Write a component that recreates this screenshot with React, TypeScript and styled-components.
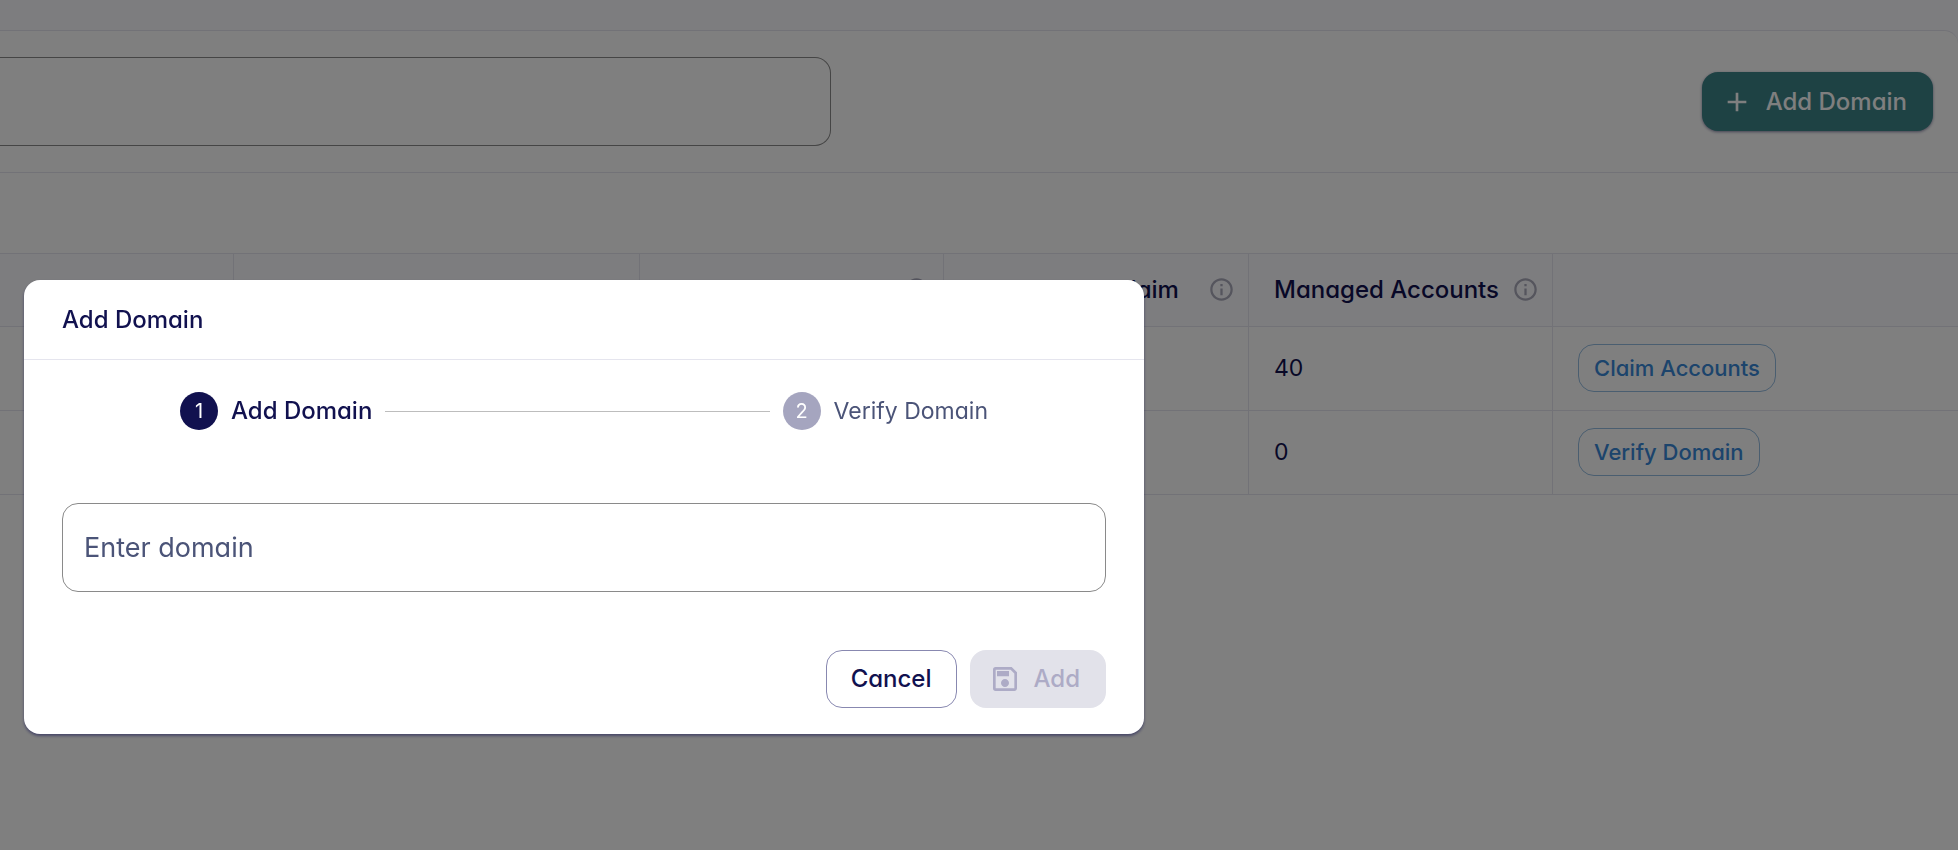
import React, { useState } from 'react';
import styled, { createGlobalStyle, css } from 'styled-components';
import { MdAdd, MdInfoOutline, MdOutlineSave } from 'react-icons/md';

const navy = '#11114f';
const line = '#e5e5ee';

const GlobalStyle = createGlobalStyle`
  *, *::before, *::after { box-sizing: border-box; }
  body {
    margin: 0;
    background: #fafaff;
    color: ${navy};
    font-family: Inter, "Open Sans", sans-serif;
    font-size: 23px;
    line-height: 32px;
    font-feature-settings: "cv11";
  }
  button, input { font: inherit; font-feature-settings: inherit; }
`;

const Page = styled.div`
  min-height: 100vh;
  display: flex;
  flex-direction: column;
  padding-top: 30px;
`;

const Panel = styled.main`
  flex: 1;
  background: #fff;
  border-top: 1px solid ${line};
  border-radius: 0 14px 0 0;
`;

const Toolbar = styled.div`
  display: flex;
  align-items: center;
  justify-content: space-between;
  gap: 26px;
  padding: 26px 25px 26px 0;
  border-bottom: 1px solid ${line};
`;

const SearchInput = styled.input`
  flex: 0 1 831px;
  min-width: 0;
  height: 89px;
  padding: 0 22px;
  background: transparent;
  border: 1px solid #8a8a8a;
  border-left: 0;
  border-radius: 0 16px 16px 0;
  color: ${navy};
  outline: none;
`;

const Button = styled.button<{ $kind: 'primary' | 'outline' | 'muted' }>`
  display: inline-flex;
  align-items: center;
  justify-content: center;
  gap: 13px;
  padding: 0 26px 0 19px;
  border: 0;
  border-radius: 16px;
  font-size: 24px;
  font-weight: 500;
  white-space: nowrap;
  ${({ $kind }) =>
    $kind === 'primary' &&
    css`
      height: 59px;
      background: #3c8488;
      color: #fff;
      box-shadow: 0 1px 3px rgba(17, 17, 79, 0.5);
    `}
  ${({ $kind }) =>
    $kind === 'outline' &&
    css`
      height: 58px;
      padding: 0 24px;
      background: #fff;
      color: ${navy};
      border: 1px solid #8888b0;
    `}
  ${({ $kind }) =>
    $kind === 'muted' &&
    css`
      height: 58px;
      background: #e2e2ea;
      color: #adabc6;
    `}
`;

const TableIntro = styled.div`
  height: 80px;
`;

const Table = styled.table`
  width: 100%;
  table-layout: fixed;
  border-collapse: separate;
  border-spacing: 0;
  border-top: 1px solid ${line};
`;

const Col = styled.col<{ $width?: number }>`
  width: ${({ $width }) => ($width ? `${$width}px` : 'auto')};
`;

const cell = css`
  border-right: 1px solid ${line};
  border-bottom: 1px solid ${line};
  text-align: left;
  vertical-align: middle;
  &:last-child { border-right: 0; }
`;

const HeadCell = styled.th`
  ${cell}
  height: 73px;
  padding: 0 13px 1px 25px;
  background: #fafaff;
  font-size: 24px;
  font-weight: 500;
`;

const HeadContent = styled.div`
  display: flex;
  align-items: center;
  justify-content: space-between;
  white-space: nowrap;
`;

const InfoIcon = styled(MdInfoOutline)`
  flex: none;
  width: 27px;
  height: 27px;
  margin-left: auto;
  color: #aaaabb;
`;

const Cell = styled.td`
  ${cell}
  height: 84px;
  padding: 0 26px 2px 25px;
`;

const RowButton = styled.button`
  display: block;
  height: 48px;
  padding: 0 15px;
  background: transparent;
  border: 1px solid #94bce0;
  border-radius: 16px;
  color: #3888d8;
  font-size: 22px;
  font-weight: 500;
  white-space: nowrap;
`;

const Overlay = styled.div`
  position: fixed;
  inset: 0;
  padding: 280px 24px 24px;
  background: rgba(0, 0, 0, 0.5);
  overflow: auto;
`;

const Dialog = styled.section`
  max-width: 1120px;
  background: #fff;
  border-radius: 16px;
  box-shadow: 0 2px 3px rgba(17, 17, 79, 0.5);
`;

const DialogTitle = styled.h2`
  margin: 0;
  padding: 24px 38px 23px;
  border-bottom: 1px solid ${line};
  font-size: 24px;
  line-height: 32px;
  font-weight: 500;
`;

const DialogBody = styled.form`
  display: flex;
  flex-direction: column;
  padding: 32px 38px 26px;
`;

const Stepper = styled.ol`
  display: flex;
  align-items: center;
  gap: 13px;
  width: 100%;
  max-width: 808px;
  margin: 0 auto;
  padding: 0;
  list-style: none;
`;

const Step = styled.li<{ $active?: boolean }>`
  display: flex;
  align-items: center;
  gap: 13px;
  white-space: nowrap;
  font-size: ${({ $active }) => ($active ? 24 : 23)}px;
  font-weight: ${({ $active }) => ($active ? 500 : 400)};
  color: ${({ $active }) => ($active ? navy : '#4b5478')};
`;

const StepNumber = styled.span<{ $active?: boolean }>`
  display: flex;
  align-items: center;
  justify-content: center;
  width: 38px;
  height: 38px;
  border-radius: 50%;
  background: ${({ $active }) => ($active ? navy : '#a5a5bf')};
  color: #fff;
  font-size: 20px;
  font-weight: 400;
`;

const StepLine = styled.li`
  flex: 1;
  height: 1px;
  background: #bdbdbd;
`;

const DomainInput = styled.input`
  width: 100%;
  height: 89px;
  margin: 73px 0 58px;
  padding: 0 21px;
  background: #fff;
  border: 1px solid #8a8a8a;
  border-radius: 16px;
  color: ${navy};
  font-size: 27px;
  outline: none;
  &::placeholder { color: #4b5478; opacity: 1; }
`;

const Actions = styled.div`
  display: flex;
  justify-content: flex-end;
  gap: 13px;
`;

const columns = [
  { width: 234 },
  { width: 406 },
  { width: 304, info: true },
  { width: 305, title: 'Accounts to Claim', info: true },
  { width: 304, title: 'Managed Accounts', info: true },
  {},
] as { width?: number; title?: string; info?: boolean }[];

const rows = [
  { managed: 40, action: 'Claim Accounts' },
  { managed: 0, action: 'Verify Domain' },
];

export default function App() {
  const [search, setSearch] = useState('');
  const [domain, setDomain] = useState('');

  return (
    <>
      <GlobalStyle />
      <Page>
        <Panel>
          <Toolbar>
            <SearchInput
              aria-label="Search domains"
              value={search}
              onChange={(e) => setSearch(e.target.value)}
            />
            <Button $kind="primary" type="button">
              <MdAdd size={32} />
              Add Domain
            </Button>
          </Toolbar>
          <TableIntro />
          <Table>
            <colgroup>
              {columns.map((c, i) => (
                <Col key={i} $width={c.width} />
              ))}
            </colgroup>
            <thead>
              <tr>
                {columns.map((c, i) => (
                  <HeadCell key={i} scope="col">
                    <HeadContent>
                      {c.title}
                      {c.info && <InfoIcon />}
                    </HeadContent>
                  </HeadCell>
                ))}
              </tr>
            </thead>
            <tbody>
              {rows.map((r) => (
                <tr key={r.action}>
                  <Cell />
                  <Cell />
                  <Cell />
                  <Cell />
                  <Cell>{r.managed}</Cell>
                  <Cell>
                    <RowButton type="button">{r.action}</RowButton>
                  </Cell>
                </tr>
              ))}
            </tbody>
          </Table>
        </Panel>
      </Page>

      <Overlay>
        <Dialog role="dialog" aria-modal="true" aria-labelledby="dialog-title">
          <DialogTitle id="dialog-title">Add Domain</DialogTitle>
          <DialogBody onSubmit={(e) => e.preventDefault()}>
            <Stepper>
              <Step $active aria-current="step">
                <StepNumber $active>1</StepNumber>
                Add Domain
              </Step>
              <StepLine aria-hidden="true" />
              <Step>
                <StepNumber>2</StepNumber>
                Verify Domain
              </Step>
            </Stepper>
            <DomainInput
              aria-label="Enter domain"
              placeholder="Enter domain"
              value={domain}
              onChange={(e) => setDomain(e.target.value)}
            />
            <Actions>
              <Button $kind="outline" type="button">Cancel</Button>
              <Button $kind="muted" type="submit" disabled={!domain}>
                <MdOutlineSave size={32} />
                Add
              </Button>
            </Actions>
          </DialogBody>
        </Dialog>
      </Overlay>
    </>
  );
}
